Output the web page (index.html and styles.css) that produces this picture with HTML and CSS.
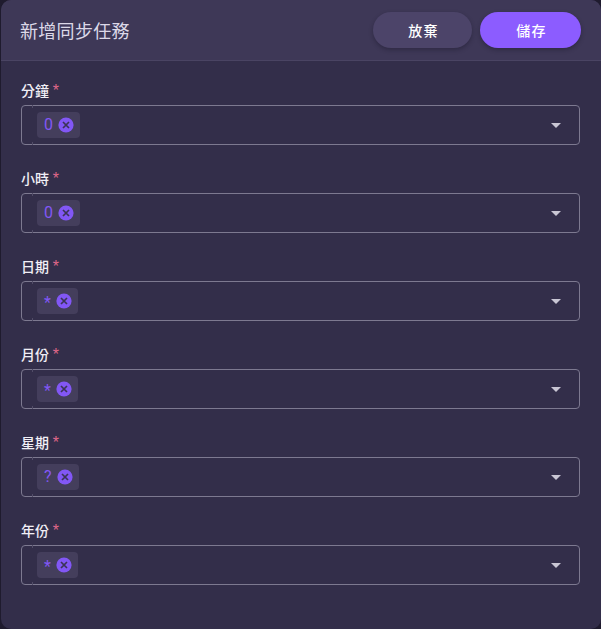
FILE: index.html
```html
<!DOCTYPE html>
<html lang="zh-Hant">
<head>
<meta charset="utf-8">
<title>新增同步任務</title>
<link rel="stylesheet" href="styles.css">
</head>
<body>
<svg class="defs" width="0" height="0" aria-hidden="true">
  <symbol id="del" viewBox="0 0 16 16">
    <circle cx="8" cy="8" r="7.6" fill="#8257f5"/>
    <path d="M5 5l6 6M11 5l-6 6" stroke="#3b3456" stroke-width="1.7" fill="none"/>
  </symbol>
</svg>
<main class="dialog">
  <header class="head">
    <h1 class="title">新增同步任務</h1>
    <div class="actions">
      <button class="btn btn-discard" type="button">放棄</button>
      <button class="btn btn-save" type="button">儲存</button>
    </div>
  </header>
  <form class="form">
    <div class="field">
      <label class="label">分鐘 <span class="req">*</span></label>
      <div class="select">
        <span class="chip"><span class="chip-text">0</span><svg class="chip-del"><use href="#del"/></svg></span>
        <span class="caret"></span>
      </div>
    </div>
    <div class="field">
      <label class="label">小時 <span class="req">*</span></label>
      <div class="select">
        <span class="chip"><span class="chip-text">0</span><svg class="chip-del"><use href="#del"/></svg></span>
        <span class="caret"></span>
      </div>
    </div>
    <div class="field">
      <label class="label">日期 <span class="req">*</span></label>
      <div class="select">
        <span class="chip"><span class="chip-text chip-star">*</span><svg class="chip-del"><use href="#del"/></svg></span>
        <span class="caret"></span>
      </div>
    </div>
    <div class="field">
      <label class="label">月份 <span class="req">*</span></label>
      <div class="select">
        <span class="chip"><span class="chip-text chip-star">*</span><svg class="chip-del"><use href="#del"/></svg></span>
        <span class="caret"></span>
      </div>
    </div>
    <div class="field">
      <label class="label">星期 <span class="req">*</span></label>
      <div class="select">
        <span class="chip"><span class="chip-text">?</span><svg class="chip-del"><use href="#del"/></svg></span>
        <span class="caret"></span>
      </div>
    </div>
    <div class="field">
      <label class="label">年份 <span class="req">*</span></label>
      <div class="select">
        <span class="chip"><span class="chip-text chip-star">*</span><svg class="chip-del"><use href="#del"/></svg></span>
        <span class="caret"></span>
      </div>
    </div>
  </form>
</main>
</body>
</html>
```
FILE: styles.css
```css
* { box-sizing: border-box; }
html, body { height: 100%; }
body {
  margin: 0;
  background: #1f1b2e;
  font-family: Inter, "Noto Sans CJK TC", sans-serif;
  overflow: hidden;
}
.defs { display: block; height: 0; }
.dialog {
  height: 629px;
  margin-left: 1px;
  background: #332e4a;
  border-radius: 10px;
  overflow: hidden;
}
.head {
  height: 61px;
  display: flex;
  align-items: center;
  justify-content: space-between;
  padding: 0 20px 1px 19px;
  background: #3e3857;
  border-bottom: 1px solid #4a4463;
}
.title {
  margin: 0;
  font-size: 18px;
  font-weight: 400;
  color: #dcd8e8;
  letter-spacing: 0.3px;
}
.actions { display: flex; gap: 8px; }
.btn {
  height: 36px;
  padding: 0 0 0 2px;
  border: 0;
  border-radius: 18px;
  color: #fff;
  font: 500 14px Inter, "Noto Sans CJK TC", sans-serif;
  letter-spacing: 1.2px;
  box-shadow: 0 2px 4px rgba(20, 16, 35, 0.35);
}
.btn-discard { width: 99px; background: #4c4469; }
.btn-save { width: 101px; background: #8c5cff; }
.form {
  display: flex;
  flex-direction: column;
  gap: 24px;
  padding: 20px 21px 0 20px;
}
.field { display: flex; flex-direction: column; }
.label {
  height: 24px;
  font-size: 14px;
  line-height: 20px;
  font-weight: 500;
  color: #f1eff6;
}
.req {
  color: #e0688a;
  font-family: "Liberation Sans", sans-serif;
  font-size: 16px;
  line-height: 0;
}
.select {
  position: relative;
  height: 40px;
  display: flex;
  align-items: center;
  justify-content: space-between;
  padding: 0 18px 0 15px;
  border: 1px solid #7d7990;
  border-radius: 4px;
}
.select::before,
.select::after {
  content: "";
  position: absolute;
  left: 10px;
  width: 1px;
  height: 3px;
  background: #524d68;
}
.select::before { top: -1px; }
.select::after { bottom: -1px; }
.chip {
  height: 26px;
  display: flex;
  align-items: center;
  gap: 5px;
  padding: 0 6px 0 7px;
  background: #443e5c;
  border-radius: 4px;
}
.chip-text {
  font-family: Roboto, sans-serif;
  font-size: 16px;
  line-height: 26px;
  color: #8257f5;
}
.chip-star { padding-top: 4px; }
.chip-del { width: 16px; height: 16px; display: block; }
.caret {
  width: 0;
  height: 0;
  border-left: 5px solid transparent;
  border-right: 5px solid transparent;
  border-top: 5px solid #c9c6d4;
}
```
